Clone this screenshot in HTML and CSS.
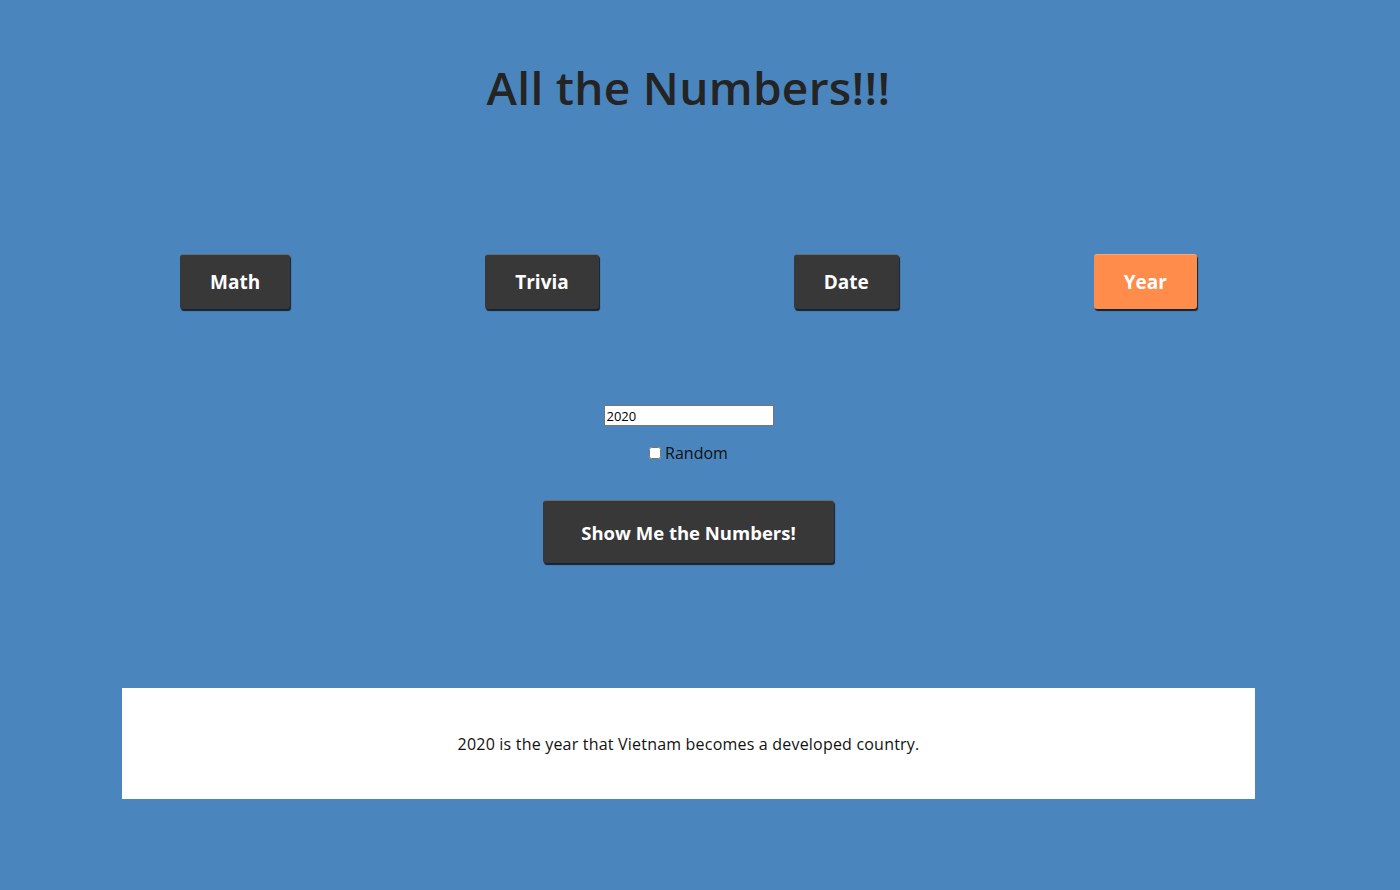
FILE: index.html
```html
<!DOCTYPE html>
<html>
<head>
<meta charset="utf-8">
<link rel="stylesheet" href="styles.css">
</head>
<body>
<div class="page">
  <h1 class="title">All the Numbers!!!</h1>
  <div class="types">
    <button class="btn type-btn">Math</button>
    <button class="btn type-btn">Trivia</button>
    <button class="btn type-btn">Date</button>
    <button class="btn type-btn active">Year</button>
  </div>
  <div class="controls">
    <input class="num-input" type="text" value="2020">
    <label class="random"><input type="checkbox" class="chk">Random</label>
    <button class="btn show-btn">Show Me the Numbers!</button>
  </div>
  <div class="result">
    <p class="result-text">2020 is the year that Vietnam becomes a developed country.</p>
  </div>
</div>
</body>
</html>
```

FILE: styles.css
```css
html, body {
  margin: 0;
  padding: 0;
  background: #4a86bd;
  height: 100%;
  overflow: hidden;
}
body {
  font-family: "Open Sans", "Noto Sans", sans-serif;
  color: #222;
}
.page {
  width: 1377px;
  display: flex;
  flex-direction: column;
  align-items: center;
}
.title {
  margin: 57px 0 0;
  font-size: 46px;
  font-weight: 600;
  line-height: 60px;
  color: #242424;
  letter-spacing: 0.3px;
}
.types {
  margin-top: 137px;
  display: flex;
  gap: 195px;
}
.btn {
  background: #383838;
  color: #fff;
  border: none;
  border-top: 1px solid #6b6b6b;
  border-radius: 3px;
  box-shadow: 1px 2px 1px rgba(0, 0, 0, 0.75);
  font-family: "Open Sans", "Noto Sans", sans-serif;
  font-weight: 700;
  cursor: pointer;
}
.type-btn {
  height: 55px;
  padding: 0 30px;
  font-size: 19px;
}
.type-btn.active {
  background: #ff8c4a;
  border-top-color: #ffa46e;
}
.controls {
  margin-top: 96px;
  display: flex;
  flex-direction: column;
  align-items: center;
}
.num-input {
  width: 164px;
  height: 19px;
  padding: 0 2px;
  border: 1px solid #767676;
  font-family: "Open Sans", sans-serif;
  font-size: 13px;
  color: #000;
  box-sizing: content-box;
}
.random {
  margin-top: 20px;
  display: flex;
  align-items: center;
  font-size: 16px;
  color: #111;
  line-height: 14px;
}
.chk {
  margin: 0 4px 0 0;
  width: 12px;
  height: 12px;
}
.show-btn {
  margin-top: 40px;
  width: 291px;
  height: 63px;
  font-size: 18.5px;
}
.result {
  margin-top: 125px;
  width: 1133px;
  height: 111px;
  background: #fff;
  display: flex;
  align-items: center;
  justify-content: center;
}
.result-text {
  margin: 0;
  font-size: 16px;
  letter-spacing: 0.2px;
  color: #111;
}
```
